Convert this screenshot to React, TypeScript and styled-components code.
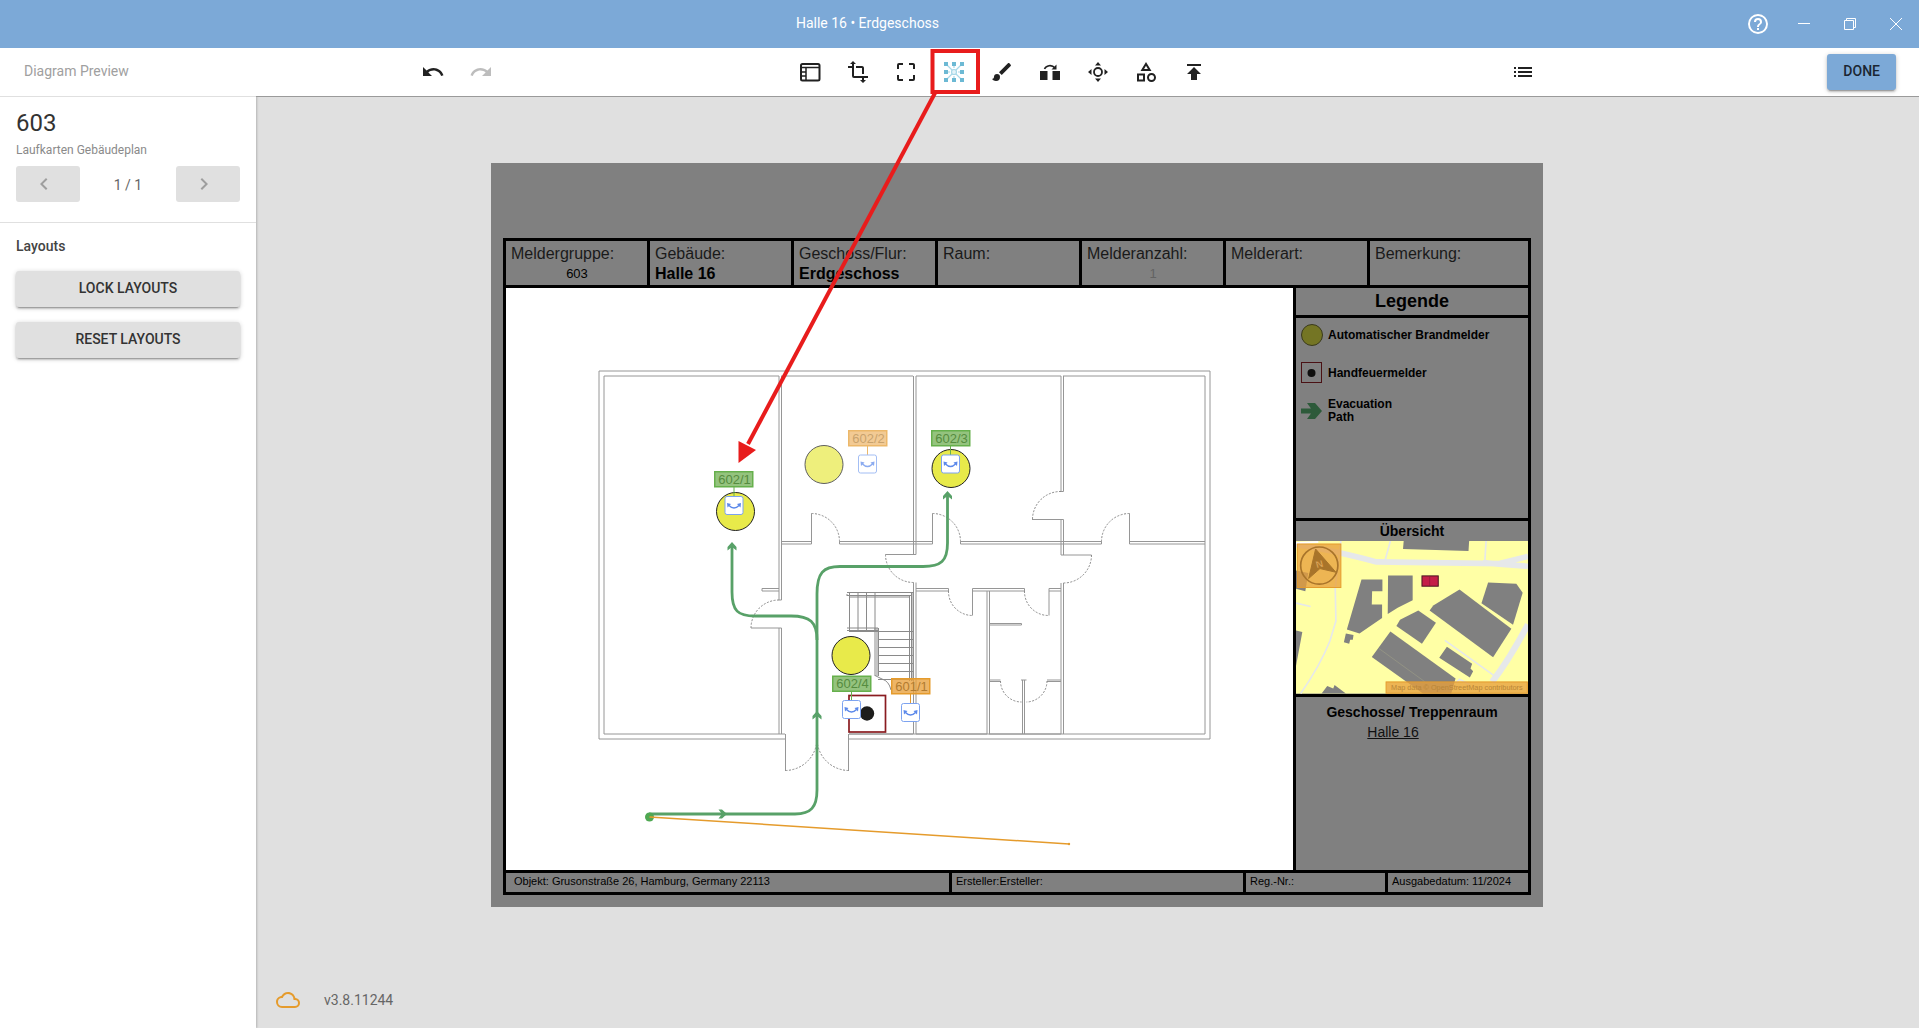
import React from 'react';
import styled, { createGlobalStyle } from 'styled-components';

const GlobalStyle = createGlobalStyle`
  *, *::before, *::after { box-sizing: border-box; }
  body { margin: 0; font-family: Roboto, "Liberation Sans", sans-serif; font-size: 14px; color: #212121; }
  button { font: inherit; color: inherit; border: 0; margin: 0; padding: 0; background: none; cursor: pointer; }
  h1, h2, p, ul, dl, dd { margin: 0; padding: 0; }
`;

const sans = '"Liberation Sans", Arial, sans-serif';
const ink = '#000';
const paper = '#808080';

/* ---------- icons ---------- */

const icons = {
  help: 'M11,18H13V16H11V18M12,2A10,10 0 0,0 2,12A10,10 0 0,0 12,22A10,10 0 0,0 22,12A10,10 0 0,0 12,2M12,20C7.59,20 4,16.41 4,12C4,7.59 7.59,4 12,4C16.41,4 20,7.59 20,12C20,16.41 16.41,20 12,20M12,6A4,4 0 0,0 8,10H10A2,2 0 0,1 12,8A2,2 0 0,1 14,10C14,12 11,11.75 11,15H13C13,12.75 16,12.5 16,10A4,4 0 0,0 12,6Z',
  undo: 'M12.5,8C9.85,8 7.45,9 5.6,10.6L2,7V16H11L7.38,12.38C8.77,11.22 10.54,10.5 12.5,10.5C16.04,10.5 19.05,12.81 20.1,16L22.47,15.22C21.08,11.03 17.15,8 12.5,8Z',
  redo: 'M18.4,10.6C16.55,9 14.15,8 11.5,8C6.85,8 2.92,11.03 1.54,15.22L3.9,16C4.95,12.81 7.95,10.5 11.5,10.5C13.45,10.5 15.23,11.22 16.62,12.38L13,16H22V7L18.4,10.6Z',
  transform: 'M22,18V16H8V4H10L7,1L4,4H6V6H2V8H6V16A2,2 0 0,0 8,18H16V20H14L17,23L20,20H18V18H22M10,8H16V14H18V8C18,6.89 17.1,6 16,6H10V8Z',
  cropFree: 'M19,3H15V5H19V9H21V5C21,3.89 20.1,3 19,3M19,19H15V21H19A2,2 0 0,0 21,19V15H19M5,15H3V19A2,2 0 0,0 5,21H9V19H5M3,5V9H5V5H9V3H5A2,2 0 0,0 3,5Z',
  brush: 'M20.71,4.63L19.37,3.29C19,2.9 18.35,2.9 17.96,3.29L9,12.25L11.75,15L20.71,6.04C21.1,5.65 21.1,5 20.71,4.63M7,14A3,3 0 0,0 4,17C4,18.31 2.84,19 2,19C2.92,20.22 4.5,21 6,21A4,4 0 0,0 10,17A3,3 0 0,0 7,14Z',
  shapes: 'M11,13.5V21.5H3V13.5H11M9,15.5H5V19.5H9V15.5M12,2L17.5,11H6.5L12,2M12,5.86L10.08,9H13.92L12,5.86M17.5,13C20,13 22,15 22,17.5C22,20 20,22 17.5,22C15,22 13,20 13,17.5C13,15 15,13 17.5,13M17.5,15A2.5,2.5 0 0,0 15,17.5A2.5,2.5 0 0,0 17.5,20A2.5,2.5 0 0,0 20,17.5A2.5,2.5 0 0,0 17.5,15Z',
  publish: 'M5,4V6H19V4H5M5,14H9V20H15V14H19L12,7L5,14Z',
  list: 'M3,13H5V11H3M3,17H5V15H3M3,9H5V7H3M7,13H21V11H7M7,17H21V15H7M7,7V9H21V7',
  left: 'M15.41,16.58L10.83,12L15.41,7.41L14,6L8,12L14,18L15.41,16.58Z',
  right: 'M8.59,16.58L13.17,12L8.59,7.41L10,6L16,12L10,18L8.59,16.58Z',
  cloud: 'M19,18H6A4,4 0 0,1 2,14A4,4 0 0,1 6,10H6.71C7.37,7.69 9.5,6 12,6A5.5,5.5 0 0,1 17.5,11.5V12H19A3,3 0 0,1 22,15A3,3 0 0,1 19,18M19.35,10.03C18.67,6.59 15.64,4 12,4C9.11,4 6.6,5.64 5.35,8.03C2.34,8.36 0,10.9 0,14A6,6 0 0,0 6,20H19A5,5 0 0,0 24,15C24,12.36 21.95,10.22 19.35,10.03Z',
};

const IconSvg = styled.svg`
  display: block;
  width: 24px;
  height: 24px;
  flex: none;
`;

const Icon = ({ name }: { name: keyof typeof icons }) => (
  <IconSvg viewBox="0 0 24 24" fill="currentColor" aria-hidden="true">
    <path d={icons[name]} />
  </IconSvg>
);

const PanelIcon = () => (
  <IconSvg viewBox="0 0 24 24" fill="none" stroke="currentColor" strokeWidth="2" aria-hidden="true">
    <rect x="3" y="4" width="18.5" height="16.5" rx="1.5" />
    <path d="M3 7.5H21M8 7V20" strokeWidth="1.5" />
    <path d="M3 12H8M3 16H8" strokeWidth="1.5" />
  </IconSvg>
);

const AnchorsIcon = () => (
  <IconSvg viewBox="0 0 24 24" aria-hidden="true">
    <g stroke="#a8d8e8" strokeWidth="1.200" fill="none">
      <path d="M4 4L20 20M20 4L4 20M12 4V8M12 16V20M4 12H8M16 12H20" />
      <circle cx="12" cy="12" r="2.5" fill="#e4f3f8" />
    </g>
    <g fill="#6cb9d4">
      {[2, 10, 18].map((y) =>
        [2, 10, 18].map((x) => (x === 10 && y === 10 ? null : <rect key={`${x}-${y}`} x={x} y={y} width="4" height="4" />)),
      )}
    </g>
  </IconSvg>
);

const FlipIcon = () => (
  <IconSvg viewBox="0 0 24 24" fill="currentColor" aria-hidden="true">
    <path d="M2 11H9.500V20H2ZM14.500 11H22V20H14.500Z" />
    <path d="M6.500 9C8 5.500 13.500 4 17 8" fill="none" stroke="currentColor" strokeWidth="1.600" />
    <path d="M18.500 4.500V9.500H13.500Z" />
  </IconSvg>
);

const MoveIcon = () => (
  <IconSvg viewBox="0 0 24 24" fill="currentColor" aria-hidden="true">
    <circle cx="12" cy="12" r="4" fill="none" stroke="currentColor" strokeWidth="1.800" />
    <path d="M12 2L15 5.500H9ZM12 22L9 18.500H15ZM2 12L5.500 9V15ZM22 12L18.500 15V9Z" />
  </IconSvg>
);

/* ---------- window frame ---------- */

const Page = styled.div`
  display: flex;
  flex-direction: column;
  min-height: 100vh;
  background: #e0e0e0;
`;

const TitleBar = styled.header`
  display: flex;
  align-items: center;
  height: 48px;
  background: #7ca9d7;
  color: #fff;
`;

const WindowTitle = styled.h1`
  flex: 1;
  font-size: 14px;
  font-weight: 400;
  line-height: 20px;
  text-align: center;
  padding-bottom: 2px;
`;

const WindowButton = styled.button`
  display: flex;
  align-items: center;
  justify-content: center;
  width: 46px;
  height: 48px;
`;

const GlyphSvg = styled.svg`
  display: block;
  width: 12px;
  height: 12px;
  fill: none;
  stroke: #fff;
`;

const Toolbar = styled.div`
  position: relative;
  z-index: 1;
  display: flex;
  align-items: center;
  justify-content: space-between;
  height: 48px;
  padding-right: 23px;
  background: #fff;
`;

const ToolbarStart = styled.div`
  display: flex;
  align-items: center;
`;

const ToolbarTitle = styled.span`
  width: 409px;
  padding: 0 0 2px 24px;
  color: #a0a0a0;
  line-height: 20px;
`;

const ToolGroup = styled.div`
  display: flex;
`;

const ToolSlot = styled.div`
  position: relative;
  display: flex;
`;

const ToolButton = styled.button<{ $muted?: boolean }>`
  display: flex;
  align-items: center;
  justify-content: center;
  width: 48px;
  height: 48px;
  color: ${(p) => (p.$muted ? '#bdbdbd' : '#212121')};
`;

const Callout = styled.svg`
  position: absolute;
  top: 0;
  left: -200px;
  width: 260px;
  height: 420px;
  pointer-events: none;
`;

const RaisedButton = styled.button<{ $primary?: boolean }>`
  height: 36px;
  padding: 0 16px 2px;
  border-radius: 3px;
  background: ${(p) => (p.$primary ? '#7ca9d7' : '#e0e0e0')};
  color: ${(p) => (p.$primary ? '#1b2733' : '#333')};
  font-weight: 500;
  line-height: 20px;
  box-shadow: 0 1px 5px rgba(0, 0, 0, 0.2), 0 2px 2px rgba(0, 0, 0, 0.14), 0 3px 1px -2px rgba(0, 0, 0, 0.2);
`;

const Main = styled.div`
  display: flex;
  flex: 1;
`;

/* ---------- sidebar ---------- */

const Sidebar = styled.aside`
  width: 256px;
  flex: none;
  background: #fff;
  box-shadow: 1px 0 2px rgba(0, 0, 0, 0.2);
`;

const SidebarSection = styled.section`
  display: flex;
  flex-direction: column;
  padding: 10px 16px 20px;
  border-top: 1px solid #e0e0e0;
`;

const GroupName = styled.h2`
  font-size: 24px;
  font-weight: 400;
  line-height: 32px;
  color: #333;
`;

const GroupKind = styled.p`
  font-size: 12px;
  line-height: 16px;
  padding: 3px 0 8px;
  color: #8a8a8a;
`;

const Pager = styled.div`
  display: flex;
  align-items: center;
  justify-content: space-between;
  color: #666;
`;

const PageCount = styled.span`
  padding-top: 2px;
  line-height: 20px;
`;

const PagerButton = styled.button`
  display: flex;
  align-items: center;
  width: 64px;
  height: 36px;
  padding: 0 16px;
  border-radius: 3px;
  background: #e0e0e0;
  color: #9e9e9e;
`;

const SectionTitle = styled.h2`
  font-size: 14px;
  font-weight: 500;
  line-height: 20px;
  padding: 3px 0 15px;
  color: #444;
`;

const ButtonStack = styled.div`
  display: grid;
  gap: 15px;
`;

/* ---------- workspace and sheet ---------- */

const Workspace = styled.main`
  display: flex;
  flex-direction: column;
  justify-content: space-between;
  flex: 1;
  min-width: 0;
  border-top: 1px solid #9a9a9a;
`;

const SheetArea = styled.div`
  padding: 66px 376px 24px 235px;
`;

const Version = styled.footer`
  display: flex;
  align-items: center;
  gap: 24px;
  padding: 0 20px 16px;
  color: #666;
  svg { color: #e59b2c; }
`;

const Sheet = styled.article`
  padding: 75px 12px 12px;
  background: ${paper};
  color: ${ink};
  font-family: ${sans};
`;

const Frame = styled.div`
  border: 3px solid ${ink};
`;

const InfoRow = styled.dl`
  display: grid;
  grid-template-columns: 144fr repeat(5, 144fr) 158fr;
  border-bottom: 3px solid ${ink};
`;

const InfoCell = styled.div`
  height: 44px;
  padding: 3px 4px 0 5px;
  font-size: 16px;
  line-height: 20px;
  white-space: nowrap;
  border-right: 3px solid ${ink};
  &:last-child { border-right: 0; }
`;

const InfoLabel = styled.dt`
  color: #1a1a1a;
`;

const InfoValue = styled.dd<{ $kind: 'name' | 'code' | 'faint' }>`
  font-size: ${(p) => (p.$kind === 'name' ? 16 : 13)}px;
  font-weight: ${(p) => (p.$kind === 'name' ? 700 : 400)};
  text-align: ${(p) => (p.$kind === 'name' ? 'left' : 'center')};
  color: ${(p) => (p.$kind === 'faint' ? '#636363' : ink)};
`;

const SheetBody = styled.div`
  display: flex;
`;

const PlanArea = styled.div`
  flex: 1;
  min-width: 0;
  background: #fff;
`;

const PlanSvg = styled.svg`
  display: block;
  width: 100%;
  height: auto;
  font-family: ${sans};
  font-size: 13px;
`;

const SidePanel = styled.div`
  display: flex;
  flex-direction: column;
  width: 235px;
  flex: none;
  border-left: 3px solid ${ink};
`;

const PanelTitle = styled.h2<{ $size: number; $height: number; $ruled?: boolean }>`
  font-size: ${(p) => p.$size}px;
  line-height: ${(p) => p.$height}px;
  text-align: center;
  border-bottom: ${(p) => (p.$ruled ? `3px solid ${ink}` : '0')};
`;

const Legend = styled.ul`
  display: flex;
  flex-direction: column;
  gap: 16px;
  min-height: 203px;
  padding: 6px 5px;
  list-style: none;
  border-bottom: 3px solid ${ink};
`;

const LegendItem = styled.li`
  display: flex;
  align-items: center;
  gap: 5px;
  height: 22px;
  font-size: 12px;
  font-weight: 700;
  line-height: 13px;
`;

const LegendSymbol = styled.svg`
  width: 22px;
  height: 22px;
  flex: none;
`;

const MapSvg = styled.svg`
  display: block;
  width: 100%;
  height: auto;
  border-bottom: 3px solid ${ink};
  box-sizing: content-box;
  font-family: ${sans};
`;

const Floors = styled.section`
  padding-top: 5px;
  text-align: center;
  font-size: 14px;
`;

const FloorLink = styled.a`
  display: inline-block;
  margin-right: 38px;
  line-height: 20px;
  color: #111;
  text-decoration: underline;
`;

const SheetFooter = styled.div`
  display: grid;
  grid-template-columns: 446fr 294fr 142fr 140fr;
  border-top: 3px solid ${ink};
`;

const FooterCell = styled.div<{ $inset?: boolean }>`
  height: 19px;
  padding-left: ${(p) => (p.$inset ? 8 : 4)}px;
  font-size: 11px;
  line-height: 17px;
  white-space: nowrap;
  border-right: 3px solid ${ink};
  &:last-child { border-right: 0; }
`;

/* ---------- floor plan ---------- */

const walls = [
  // outer shell
  'M785 739H599V371H1210V739H849M785 734H604V376H779M781 376H913M916 376H1061M1063 376H1205V734H849',
  // hall and its left-hand door
  'M779 376V600M781.500 376V600M779 600H781.500M779 628V734M781.500 628V734M751 628H781.500M762 588.500H779M762 591H779M762 588.500V591',
  // entrance
  'M785.500 734V771M848.500 734V771',
  // corridor, north side
  'M781.500 541.500H811.500M781.500 544H811.500M839.500 541.500H932.500M839.500 544H932.500M960.500 541.500H1101.500M960.500 544H1101.500M1129.500 541.500H1205M1129.500 544H1205M811.500 513.500V544M839.500 541.500V544M932.500 513.500V544M960.500 541.500V544M1101.500 541.500V544M1129.500 513.500V544',
  // middle wall
  'M913.500 376V554.500M916 376V554.500M885.500 554.500H916M913.500 582.500V734M916 582.500V734',
  // right wall
  'M1061 376V491.500H1063.500V376M1061 519.500V555M1063.500 519.500V555M1032 519.500H1063.500M1061 555H1091.500M1061 583V734M1063.500 583V734',
  // corridor, south side
  'M916 588.500H948.500V591H916M972.500 588.500H1024.500V591H972.500M1049 588.500H1061M1049 591H1061M972.500 588.500V615.500M1049 588.500V615.500M987 591V734M989.500 591V734',
  // washrooms
  'M989.500 623.500H1021.500V625H989.500M989.500 680H1000.500M989.500 681.500H1000.500M1021 680H1026.500M1047 680H1061M1047 681.500H1061M1022.500 680V734M1024.500 680V734',
  // south side behind the rooms
  'M849 734H913M916 734H987M989 734H1061',
];

const doorArcs = [
  'M779 600A28 28 0 0 0 751 628',
  'M811.500 513.500A28 28 0 0 1 839.500 541.500',
  'M932.500 513.500A28 28 0 0 1 960.500 541.500',
  'M1129.500 513.500A28 28 0 0 0 1101.500 541.500',
  'M885.500 554.500A28 28 0 0 0 913.500 582.500',
  'M1061 491.500A28 28 0 0 0 1032.500 519.500',
  'M1091.500 555A28 28 0 0 1 1063.500 583',
  'M948.500 591A24 24 0 0 0 972.500 615.500',
  'M1024.500 591A24 24 0 0 0 1049 615.500',
  'M1000.500 681A21 21 0 0 0 1021.500 702',
  'M1047 681A21 21 0 0 1 1026.500 702',
  'M785.500 770.500A32 32 0 0 0 817 739',
  'M848.500 770.500A32 32 0 0 1 817 739',
];

const stairs =
  'M847 592.500H914M847 595.500H911M849 597H909M849.500 592.500V632M858 592.500V632M866.500 592.500V632M875 592.500V632M847 628H878M847 630.500H878M875 628V676M877 628V676M878.500 628V676M909.500 596V681M911.500 593V681M913 593V681M849 631.500H913M878 639.500H913M878 647.500H913M878 655.500H913M878 663.500H913M878 671.500H913M878 679.500H913M875 675.500L882 679Q889 681 891 690M847 594V596';

const detectors = [
  { x: 735.5, y: 511.5 },
  { x: 824, y: 464.5, faint: true },
  { x: 951, y: 468.5 },
  { x: 851, y: 655.5 },
];

type Tag = { text: string; x: number; y: number; tone: 'green' | 'orange'; ix: number; iy: number; faint?: boolean };

const tags: Tag[] = [
  { text: '602/1', x: 714, y: 471, tone: 'green', ix: 734, iy: 505.5 },
  { text: '602/2', x: 848, y: 430, tone: 'orange', ix: 867.5, iy: 464, faint: true },
  { text: '602/3', x: 931, y: 430, tone: 'green', ix: 950.5, iy: 464 },
  { text: '602/4', x: 832, y: 675.5, tone: 'green', ix: 851.5, iy: 709.5 },
  { text: '601/1', x: 891, y: 678, tone: 'orange', ix: 910.5, iy: 712.5 },
];

const tones = {
  green: { fill: '#76b25a', line: '#66b04c', text: '#568c40' },
  orange: { fill: '#e8a03c', line: '#e59b2c', text: '#b27c30' },
};

const TagMark = ({ text, x, y, tone, ix, iy, faint }: Tag) => {
  const c = tones[tone];
  return (
    <g opacity={faint ? 0.7 : 1}>
      <path d={`M${ix} ${y + 16}V${iy - 9}`} stroke={c.line} />
      <rect x={x + 0.75} y={y + 0.75} width="38" height="15" fill={c.fill} fillOpacity="0.78" stroke={c.line} strokeWidth="1.500" />
      <text x={x + 20.5} y={y + 12.5} textAnchor="middle" fill={c.text}>{text}</text>
      <rect x={ix - 9} y={iy - 9} width="18" height="18" rx="2" fill="#fff" stroke="#7da3f0" />
      <path d={`M${ix - 5} ${iy}Q${ix} ${iy + 5} ${ix + 5} ${iy}`} fill="none" stroke="#5b88ea" strokeWidth="1.500" />
      <path
        d={`M${ix - 7} ${iy - 2.5}L${ix - 3} ${iy - 1.5}L${ix - 6.5} ${iy + 2}ZM${ix + 7} ${iy - 2.5}L${ix + 3} ${iy - 1.5}L${ix + 6.5} ${iy + 2}Z`}
        fill="#5b88ea"
      />
    </g>
  );
};

const routeHead = 'M-4.500 8.500V5L0 0L4.500 5V8.500L0 5Z';

const FloorPlan = () => (
  <PlanSvg viewBox="506 288 787 582" role="img" aria-label="Grundriss Erdgeschoss">
    <g fill="none" stroke="#969696">
      {walls.map((d) => <path key={d} d={d} />)}
      <path d={stairs} stroke="#8a8a8a" />
    </g>
    <g fill="none" stroke="#888" strokeDasharray="2 1.500">
      {doorArcs.map((d) => <path key={d} d={d} />)}
    </g>
    <g fill="none" stroke="#58a168" strokeWidth="2.800">
      <path d="M649 814H795C811 814 817 807 817 790V594C817 573 823 566.500 840 566.500H923C941 566.500 947.500 561 947.500 543V494" />
      <path d="M817 640C817 622 810 616 791 616H755C738 616 732 611 732 592V546" />
    </g>
    <g fill="#58a168">
      <path d={routeHead} transform="translate(732 542)" />
      <path d={routeHead} transform="translate(947.500 491)" />
      <path d={routeHead} transform="translate(817 711)" />
      <path d={routeHead} transform="translate(727 814) rotate(90)" />
      <circle cx="649.500" cy="817" r="4.500" fill="#4fa852" />
    </g>
    <path d="M649.500 817L1069 844" stroke="#e59b2c" strokeWidth="1.500" />
    <circle cx="1069" cy="844" r="1.200" fill="#e59b2c" />
    {detectors.map((d) => (
      <circle key={d.x} cx={d.x} cy={d.y} r="19" fill="#e8ea4a" stroke="#222" opacity={d.faint ? 0.72 : 1} />
    ))}
    <rect x="849" y="695.500" width="36.500" height="36.500" fill="none" stroke="#8a1c20" strokeWidth="1.700" />
    <circle cx="867" cy="713.500" r="7.200" fill="#1d1d1b" />
    {tags.map((t) => <TagMark key={t.text} {...t} />)}
  </PlanSvg>
);

const OverviewMap = () => (
  <MapSvg viewBox="78 124 698 459" role="img" aria-label="Lageplan">
    <rect x="78" y="124" width="698" height="459" fill="#ffffa5" />
    <g fill="none" stroke="#e6e8ea">
      <path d="M78 135Q180 150 320 187L690 192L776 170M640 190L776 200" strokeWidth="17" />
      <path d="M776 375Q720 480 668 548" strokeWidth="19" />
      <path d="M362 124L346 182M650 124L646 188M213 124L196 265L198 365L180 425Q150 500 92 583M78 311L122 321M526 423L675 530M560 550L570 540L600 556" strokeWidth="5" />
      <path d="M78 130L145 127" strokeWidth="6" stroke="#fff" />
    </g>
    <g fill="#808080">
      <path d="M402 124H599L597 154L400 148Z" />
      <path d="M275 240H338V275H307L306 315H337V356L269 402L231 390Z" />
      <path d="M355 228H429V302L384 325L354 344Z" />
      <path d="M656 249L741 253L760 280L731 376L636 311Z" />
      <path d="M570 270L726 388L671 474L480 333L491 318Z" />
      <path d="M446 333L499 370L457 433L380 380L391 361Z" />
      <path d="M362 396L558 538L545 583H460L306 473Z" />
      <path d="M532 442L608 493L603 508L611 516L601 535L509 475Z" />
      <path d="M228 402L251 407L249 421H241L238 433L222 429Z" />
      <path d="M78 393L97 398L78 500ZM78 213L115 220L106 275L78 268Z" />
      <path d="M155 583L172 560L190 568L194 557L228 583Z" />
    </g>
    <path d="M327 447L465 547" stroke="#b5b58c" />
    <rect x="457" y="229" width="49" height="31" fill="#c41f48" stroke="#4a1522" strokeWidth="3" />
    <path d="M480 229V260" stroke="#8c1a3a" strokeWidth="2" />
    <g stroke="#e59b2c" strokeWidth="3" fill="#e8a03c" fillOpacity="0.780">
      <rect x="82" y="133" width="131" height="131" />
      <rect x="349" y="548" width="425" height="34" />
    </g>
    <circle cx="148" cy="198" r="56" fill="none" stroke="#a8742a" strokeWidth="5" />
    <path d="M137 148L198 218L150 207L116 237Z" fill="#a8742a" stroke="#a8742a" strokeWidth="3" />
    <text x="148" y="204" fontSize="30" fontWeight="700" textAnchor="middle" fill="#e8b060" stroke="#a8742a" strokeWidth="1" transform="rotate(-14 148 193)">N</text>
    <text x="562" y="573" fontSize="22" textAnchor="middle" fill="#b98638">Map data © OpenStreetMap contributors</text>
  </MapSvg>
);

/* ---------- sheet data ---------- */

const info: { label: string; value?: string; kind?: 'name' | 'code' | 'faint' }[] = [
  { label: 'Meldergruppe:', value: '603', kind: 'code' },
  { label: 'Gebäude:', value: 'Halle 16', kind: 'name' },
  { label: 'Geschoss/Flur:', value: 'Erdgeschoss', kind: 'name' },
  { label: 'Raum:' },
  { label: 'Melderanzahl:', value: '1', kind: 'faint' },
  { label: 'Melderart:' },
  { label: 'Bemerkung:' },
];

const tools = [
  { label: 'Panel', icon: <PanelIcon /> },
  { label: 'Transform', icon: <Icon name="transform" /> },
  { label: 'Fit to frame', icon: <Icon name="cropFree" /> },
  { label: 'Edit layouts', icon: <AnchorsIcon />, marked: true },
  { label: 'Style', icon: <Icon name="brush" /> },
  { label: 'Flip', icon: <FlipIcon /> },
  { label: 'Move', icon: <MoveIcon /> },
  { label: 'Shapes', icon: <Icon name="shapes" /> },
  { label: 'Publish', icon: <Icon name="publish" /> },
];

export default function App() {
  return (
    <Page>
      <GlobalStyle />
      <TitleBar>
        <WindowTitle>Halle 16 • Erdgeschoss</WindowTitle>
        <WindowButton aria-label="Help"><Icon name="help" /></WindowButton>
        <WindowButton aria-label="Minimize">
          <GlyphSvg viewBox="0 0 12 12"><path d="M0 5.500H12" /></GlyphSvg>
        </WindowButton>
        <WindowButton aria-label="Restore">
          <GlyphSvg viewBox="0 0 12 12"><path d="M0.500 2.500H9.500V11.500H0.500ZM2.500 2.500V0.500H11.500V9.500H9.500" /></GlyphSvg>
        </WindowButton>
        <WindowButton aria-label="Close">
          <GlyphSvg viewBox="0 0 12 12"><path d="M0 0L12 12M12 0L0 12" /></GlyphSvg>
        </WindowButton>
      </TitleBar>

      <Toolbar>
        <ToolbarStart>
          <ToolbarTitle>Diagram Preview</ToolbarTitle>
          <ToolButton aria-label="Undo"><Icon name="undo" /></ToolButton>
          <ToolButton $muted aria-label="Redo"><Icon name="redo" /></ToolButton>
        </ToolbarStart>
        <ToolGroup>
          {tools.map((t) => (
            <ToolSlot key={t.label}>
              <ToolButton aria-label={t.label}>{t.icon}</ToolButton>
              {t.marked && (
                <Callout viewBox="0 0 260 420" aria-hidden="true">
                  <rect x="202.500" y="3" width="45.500" height="41" fill="none" stroke="#e81c1c" strokeWidth="4" />
                  <path d="M205 45L18 396" stroke="#e81c1c" strokeWidth="4" />
                  <path d="M8.500 415L8.500 393L26 402Z" fill="#e81c1c" />
                </Callout>
              )}
            </ToolSlot>
          ))}
        </ToolGroup>
        <ToolButton aria-label="List"><Icon name="list" /></ToolButton>
        <RaisedButton $primary>DONE</RaisedButton>
      </Toolbar>

      <Main>
        <Sidebar>
          <SidebarSection>
            <GroupName>603</GroupName>
            <GroupKind>Laufkarten Gebäudeplan</GroupKind>
            <Pager>
              <PagerButton aria-label="Previous"><Icon name="left" /></PagerButton>
              <PageCount>1 / 1</PageCount>
              <PagerButton aria-label="Next"><Icon name="right" /></PagerButton>
            </Pager>
          </SidebarSection>
          <SidebarSection>
            <SectionTitle>Layouts</SectionTitle>
            <ButtonStack>
              <RaisedButton>LOCK LAYOUTS</RaisedButton>
              <RaisedButton>RESET LAYOUTS</RaisedButton>
            </ButtonStack>
          </SidebarSection>
        </Sidebar>

        <Workspace>
          <SheetArea>
            <Sheet>
              <Frame>
                <InfoRow>
                  {info.map((c) => (
                    <InfoCell key={c.label}>
                      <InfoLabel>{c.label}</InfoLabel>
                      {c.value && <InfoValue $kind={c.kind ?? 'name'}>{c.value}</InfoValue>}
                    </InfoCell>
                  ))}
                </InfoRow>
                <SheetBody>
                  <PlanArea><FloorPlan /></PlanArea>
                  <SidePanel>
                    <PanelTitle $size={18} $height={27} $ruled>Legende</PanelTitle>
                    <Legend>
                      <LegendItem>
                        <LegendSymbol viewBox="0 0 22 22"><circle cx="11" cy="11" r="10.500" fill="#747524" stroke="#3a3a1c" /></LegendSymbol>
                        Automatischer Brandmelder
                      </LegendItem>
                      <LegendItem>
                        <LegendSymbol viewBox="0 0 22 22">
                          <rect x="0.500" y="0.500" width="20" height="20" fill="none" stroke="#4a1114" />
                          <circle cx="10.500" cy="11" r="4" fill="#0f0f0e" />
                        </LegendSymbol>
                        Handfeuermelder
                      </LegendItem>
                      <LegendItem>
                        <LegendSymbol viewBox="0 0 22 22"><path d="M0 8.500H10L6 3H14L21 11L14 19H6L10 13.500H0Z" fill="#2d5a3a" /></LegendSymbol>
                        <span>Evacuation<br />Path</span>
                      </LegendItem>
                    </Legend>
                    <PanelTitle $size={14} $height={20}>Übersicht</PanelTitle>
                    <OverviewMap />
                    <Floors>
                      <PanelTitle $size={14} $height={20}>Geschosse/ Treppenraum</PanelTitle>
                      <FloorLink href="#halle-16">Halle 16</FloorLink>
                    </Floors>
                  </SidePanel>
                </SheetBody>
                <SheetFooter>
                  <FooterCell $inset>Objekt: Grusonstraße 26, Hamburg, Germany 22113</FooterCell>
                  <FooterCell>Ersteller:Ersteller:</FooterCell>
                  <FooterCell>Reg.-Nr.:</FooterCell>
                  <FooterCell>Ausgabedatum: 11/2024</FooterCell>
                </SheetFooter>
              </Frame>
            </Sheet>
          </SheetArea>
          <Version>
            <Icon name="cloud" />
            <span>v3.8.11244</span>
          </Version>
        </Workspace>
      </Main>
    </Page>
  );
}
